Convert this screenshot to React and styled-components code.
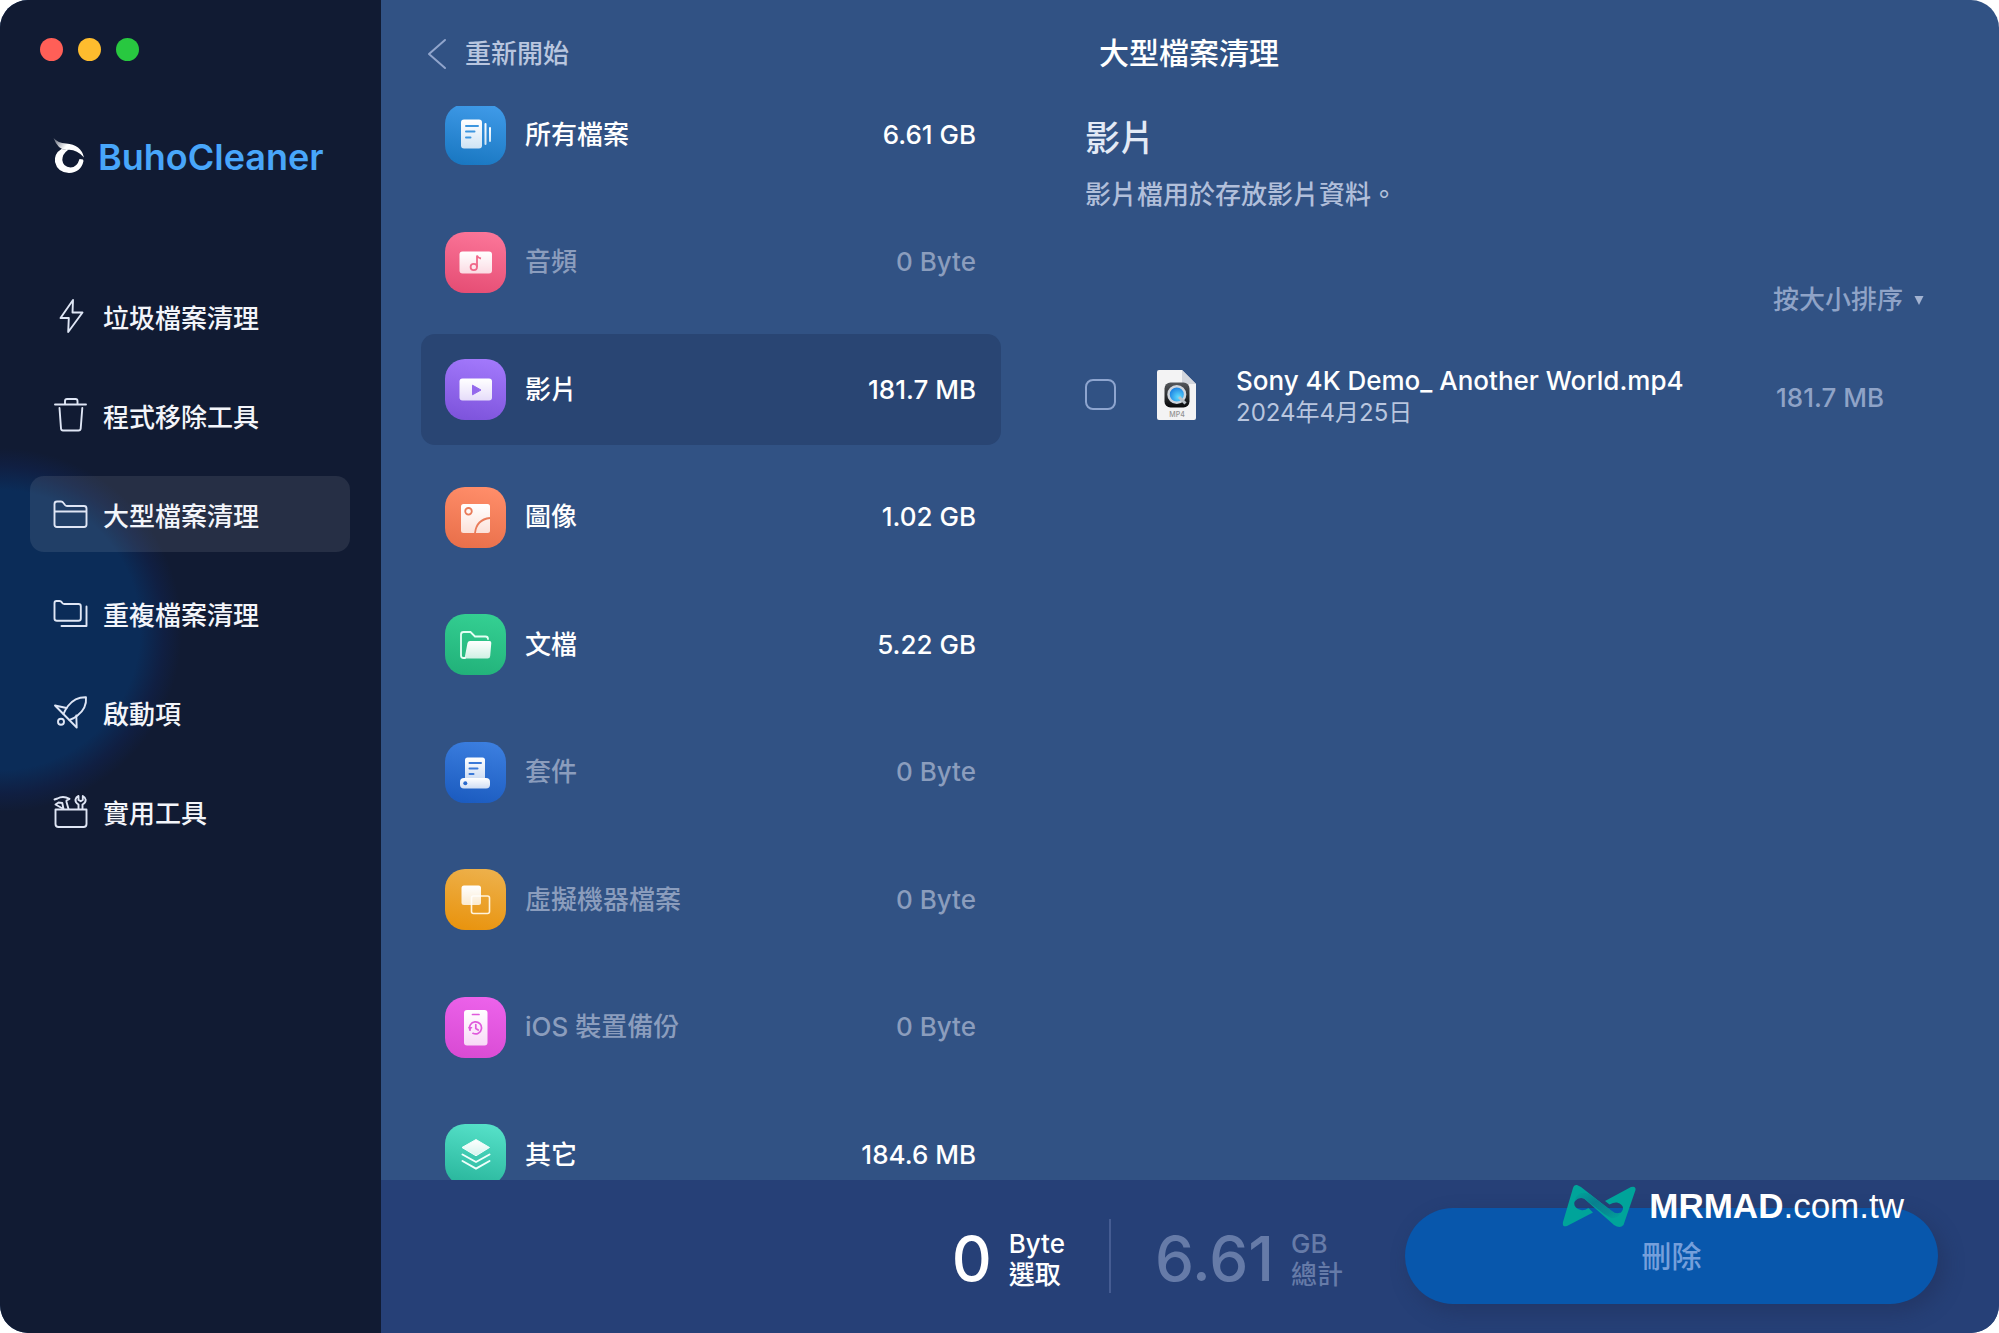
import React, { useState } from "react";
import styled, { createGlobalStyle } from "styled-components";

const GlobalStyle = createGlobalStyle`
  *, *::before, *::after { box-sizing: border-box; }
  body {
    margin: 0;
    background: #ffffff;
    color: #ffffff;
    font-family: Inter, "Noto Sans CJK TC", sans-serif;
    font-size: 26px;
    font-weight: 500;
    line-height: 36px;
  }
  button, select, input { font: inherit; color: inherit; }
  h1, h2, p, ul { margin: 0; padding: 0; }
  ul { list-style: none; }
`;

const Window = styled.div`
  position: relative;
  display: grid;
  grid-template-columns: 381px minmax(0, 1fr);
  height: 100vh;
  overflow: hidden;
  border-radius: 28px;
  background: #315284;
`;

/* Sidebar */

const Sidebar = styled.aside`
  display: flex;
  flex-direction: column;
  padding: 38px 31px 0 30px;
  background:
    radial-gradient(circle at 0 630px, #0b2c58 0, #0b2c58 140px, #101f42 164px, transparent 182px),
    #111b33;
`;

const TrafficLights = styled.div`
  display: flex;
  gap: 15px;
  padding-left: 10px;
`;

const Light = styled.button`
  width: 23px;
  height: 23px;
  padding: 0;
  border: 0;
  border-radius: 50%;
  background: ${(p) => p.$color};
`;

const Brand = styled.div`
  display: flex;
  align-items: center;
  gap: 12px;
  margin-top: 72px;
  padding-left: 22px;
  height: 48px;
  color: #48a6fa;
  font-size: 36px;
  font-weight: 600;
`;

const Nav = styled.nav`
  display: flex;
  flex-direction: column;
  gap: 23px;
  margin-top: 97px;
`;

const NavLink = styled.a`
  display: flex;
  align-items: center;
  gap: 15px;
  height: 76px;
  padding-left: 22px;
  border-radius: 14px;
  background: ${(p) => (p.$active ? "rgba(255, 255, 255, 0.09)" : "transparent")};
  color: #f3f5fa;
  text-decoration: none;
`;

const NavLabel = styled.span`
  padding-top: 5px;
`;

const LineIcon = styled.svg`
  flex: none;
  width: 36px;
  height: 36px;
  fill: none;
  stroke: #dfe6f5;
  stroke-width: 1.9;
  stroke-linecap: round;
  stroke-linejoin: round;
`;

/* Main area */

const Main = styled.main`
  display: grid;
  grid-template-columns: 620px minmax(0, 1fr);
  grid-template-rows: minmax(0, 1fr) auto;
`;

const ListPane = styled.section`
  display: flex;
  flex-direction: column;
  min-height: 0;
  padding-left: 40px;
`;

const PaneHeader = styled.header`
  display: flex;
  flex: none;
  align-items: center;
  height: 106px;
`;

const BackButton = styled.button`
  display: flex;
  align-items: center;
  gap: 18px;
  padding: 1px 0 0 6px;
  border: 0;
  background: none;
  color: #b9c6df;
`;

const Scroller = styled.div`
  flex: 1;
  min-height: 0;
  overflow: hidden;
`;

const CategoryList = styled.ul`
  display: flex;
  flex-direction: column;
  justify-content: space-between;
  height: calc(100% + 57px);
  margin-top: -27px;
`;

const CategoryButton = styled.button`
  display: flex;
  align-items: center;
  width: 100%;
  height: 111px;
  padding: 0 25px 0 24px;
  border: 0;
  border-radius: 14px;
  background: ${(p) => (p.$selected ? "#294573" : "transparent")};
  color: ${(p) => (p.$empty ? "#8b9dbd" : "#ffffff")};
  text-align: left;
`;

const Tile = styled.svg`
  flex: none;
  width: 61px;
  height: 61px;
  margin-right: 19px;
`;

const CategoryName = styled.span`
  flex: 1;
`;

const Detail = styled.section`
  display: flex;
  flex-direction: column;
  padding: 0 61px 0 84px;
`;

const PageTitle = styled.h1`
  padding-left: 14px;
  font-size: 30px;
  font-weight: 500;
`;

const DetailTitle = styled.h2`
  margin-top: 7px;
  color: #e3eaf6;
  font-size: 35px;
  font-weight: 500;
  line-height: 50px;
`;

const Description = styled.p`
  margin-top: 14px;
  color: #b1bfda;
`;

const SortLabel = styled.label`
  display: flex;
  align-items: center;
  align-self: flex-end;
  gap: 10px;
  margin-top: 69px;
  padding-right: 14px;
  color: #8fa3c7;
`;

const SortSelect = styled.select`
  appearance: none;
  height: 36px;
  padding: 0;
  border: 0;
  background: none;
`;

const FileRow = styled.li`
  display: flex;
  align-items: center;
  margin-top: 21px;
  padding-right: 54px;
  height: 111px;
`;

const CheckBox = styled.input`
  appearance: none;
  flex: none;
  width: 31px;
  height: 31px;
  margin: 0;
  border: 2px solid #8ea5cf;
  border-radius: 8px;
  &:checked { background: #48a6fa; }
`;

const FileIcon = styled.svg`
  flex: none;
  width: 42px;
  height: 52px;
  margin: 0 38px 0 40px;
`;

const FileLabel = styled.label`
  display: flex;
  flex: 1;
  flex-direction: column;
  padding-top: 4px;
`;

const FileName = styled.span`
  line-height: 32px;
`;

const FileDate = styled.span`
  color: #b9c6df;
  font-size: 24px;
  font-weight: 400;
  line-height: 32px;
`;

const FileSize = styled.span`
  padding-top: 6px;
  color: #8fa3c7;
`;

/* Footer */

const Footer = styled.footer`
  display: flex;
  grid-column: 1 / -1;
  align-items: center;
  justify-content: flex-end;
  padding: 28px 61px 29px 40px;
  background: #264077;
`;

const Stat = styled.div`
  display: flex;
  align-items: center;
  gap: 17px;
  padding-top: 6px;
  color: ${(p) => (p.$muted ? "#667ba8" : "#ffffff")};
`;

const StatNumber = styled.span`
  font-size: 62px;
  line-height: 72px;
`;

const StatUnit = styled.span`
  display: flex;
  flex-direction: column;
  line-height: 31px;
`;

const Divider = styled.span`
  width: 2px;
  height: 74px;
  margin: 0 44px;
  background: #455c92;
`;

const DeleteButton = styled.button`
  flex: 0 1 533px;
  height: 96px;
  margin-left: 62px;
  border: 0;
  border-radius: 48px;
  background: #0857ac;
  box-shadow: 6px 8px 20px rgba(32, 44, 84, 0.45);
  color: #759fdb;
  font-size: 30px;
`;

const Watermark = styled.div`
  position: absolute;
  right: 95px;
  bottom: 103px;
  display: flex;
  align-items: center;
  gap: 12px;
  font-family: "Liberation Sans", Arial, sans-serif;
  font-size: 35px;
  font-weight: 400;
  line-height: 48px;
`;

/* Drawings */

const navItems = [
  {
    name: "垃圾檔案清理",
    art: <path d="M20 1 7.500 19H15.800L15.200 33 29.500 13.500H19.500Z" />,
  },
  {
    name: "程式移除工具",
    art: (
      <>
        <path d="M2 6.500H33M12 6.500V3Q12 1 14 1H22.500Q24.500 1 24.500 3V6.500" />
        <path d="M6.500 10 8 30.500Q8.200 32.500 10 32.500H25.500Q27.500 32.500 27.700 30.500L29.300 10" />
      </>
    ),
  },
  {
    name: "大型檔案清理",
    art: (
      <path d="M1.500 7Q1.500 4.500 4 4.500H8Q9.500 4.500 10.500 6L12 8Q12.800 9 14 9H31Q33.500 9 33.500 11.500V27.500Q33.500 30 31 30H4Q1.500 30 1.500 27.500ZM1.500 14.500H33.500" />
    ),
  },
  {
    name: "重複檔案清理",
    art: (
      <path d="M1.500 7Q1.500 5 3.500 5H6.500Q8 5 8.800 6.200L9.300 7Q10 8 11.500 8H25.500Q27.800 8 27.800 10.300V22.500Q27.800 24.800 25.500 24.800H4Q1.500 24.800 1.500 22.500ZM33.500 10.500V30H8.500" />
    ),
  },
  {
    name: "啟動項",
    art: (
      <>
        <path d="M2 10.500 23.700 32.500 23.300 20.500M2 10.500 13.500 13" />
        <path d="M10.500 19Q12 15 15 11 22 2 33 2.300 34 13 24.500 20.500 21 23.500 16.500 25" />
        <circle cx="8" cy="26.700" r="3" />
      </>
    ),
  },
  {
    name: "實用工具",
    art: (
      <>
        <path d="M2.500 15.500H33.500V30Q33.500 33 30.500 33H5.500Q2.500 33 2.500 30Z" />
        <path d="M1.500 5.500 4.500 4.500Q10 1.500 16.500 4.800L13.500 6.500V8L15.500 15M10.500 15 9.300 9 5.500 8.500 2.500 10.500Z" />
        <path d="M25.500 15V10.500Q22 8.500 22.500 5.500 23 3 25.500 2V6L27.700 7.200 29.800 6V2Q32.500 3.500 32.700 5.800 32.700 9 29.500 10.500V15" />
      </>
    ),
  },
];

const categories = [
  {
    id: "all", name: "所有檔案", size: "6.61 GB", from: "#3f9ae8", to: "#1a78c2",
    art: (
      <>
        <rect x="16" y="15.500" width="21" height="29" rx="3" />
        <rect x="39.500" y="19" width="2" height="22" rx="1" />
        <rect x="44" y="23" width="2" height="15" rx="1" />
        <path d="M21 22H33M21 27.500H29.500M21 33.500H25.500" fill="none" stroke="#3c96df" strokeWidth="2" strokeLinecap="round" />
      </>
    ),
  },
  {
    id: "audio", name: "音頻", size: "0 Byte", empty: true, from: "#fb7598", to: "#e64e75",
    art: (
      <>
        <rect x="14.500" y="19.500" width="32.500" height="22" rx="3" />
        <path d="M32 35V23.500Q33 26 36 26.500" fill="none" stroke="#f0688a" strokeWidth="1.800" />
        <circle cx="28.800" cy="35" r="3.200" fill="none" stroke="#f0688a" strokeWidth="1.800" />
      </>
    ),
  },
  {
    id: "video", name: "影片", size: "181.7 MB", from: "#a278fb", to: "#7e54dc",
    art: (
      <>
        <rect x="14.500" y="19.500" width="32.500" height="22" rx="3" />
        <path d="M27.500 26.200V35.800L36 31Z" fill="#9468ec" stroke="#9468ec" strokeLinejoin="round" />
      </>
    ),
  },
  {
    id: "image", name: "圖像", size: "1.02 GB", from: "#ff8d69", to: "#e9704b",
    art: (
      <>
        <rect x="16" y="17" width="29" height="29" rx="2.500" />
        <circle cx="23.500" cy="24.300" r="3.300" fill="none" stroke="#e97b59" strokeWidth="1.800" />
        <path d="M30 46Q31.500 32.500 45 31" fill="none" stroke="#e97b59" strokeWidth="1.800" />
      </>
    ),
  },
  {
    id: "document", name: "文檔", size: "5.22 GB", from: "#34cf92", to: "#22b27a",
    art: (
      <>
        <path d="M20 44H18.500Q16 44 16 41.500V20.500Q16 18 18.500 18H25.500L30 22.500H40.500Q43 22.500 43 25" fill="none" stroke="#e4fff4" strokeWidth="1.800" strokeLinecap="round" />
        <path d="M25 27H44.500Q46.500 27 46.300 29L45.200 42Q45 44.500 42.500 44.500H19.500L22.500 29Q23 27 25 27Z" />
      </>
    ),
  },
  {
    id: "package", name: "套件", size: "0 Byte", empty: true, from: "#3b7edf", to: "#1c5cc0",
    art: (
      <>
        <path d="M20 36V18Q20 15.500 22.500 15.500H37.500Q40 15.500 40 18V36Z" />
        <rect x="15" y="36" width="30" height="10.500" rx="4" />
        <circle cx="20.300" cy="41.200" r="2" fill="#2a6acd" />
        <path d="M24.500 21H36M24.500 26.500H32.500M24.500 32H28.500" fill="none" stroke="#3a79d8" strokeWidth="2" strokeLinecap="round" />
      </>
    ),
  },
  {
    id: "vm", name: "虛擬機器檔案", size: "0 Byte", empty: true, from: "#edb04a", to: "#e9940f",
    art: (
      <>
        <rect x="26.500" y="27" width="18" height="17.500" rx="2" fill="none" stroke="#fff3dc" strokeWidth="1.600" />
        <rect x="16.500" y="16.500" width="19.500" height="19.500" rx="2.500" />
      </>
    ),
  },
  {
    id: "ios", name: "iOS 裝置備份", size: "0 Byte", empty: true, from: "#ec62ea", to: "#d94bd4",
    art: (
      <>
        <rect x="19" y="13" width="23.500" height="35.500" rx="3" />
        <path d="M27.500 17.500H34M25 33.200A6 6 0 1 1 28 36.300M30.800 27.500V31.500L33.200 33" fill="none" stroke="#e05adc" strokeWidth="1.700" strokeLinecap="round" />
        <path d="M23 30H27.500L25 33.500Z" fill="#e05adc" />
      </>
    ),
  },
  {
    id: "other", name: "其它", size: "184.6 MB", from: "#55e0c8", to: "#2ab79d",
    art: (
      <>
        <path d="M31 15.500 44.500 23.500 31 31.800 17 23.500Z" stroke="#f1fffc" strokeLinejoin="round" />
        <path d="M17.500 30.500 31 38 44.500 30.500M17.500 37 31 44.700 44.500 37" fill="none" stroke="#effffb" strokeWidth="2" strokeLinecap="round" strokeLinejoin="round" />
      </>
    ),
  },
];

function CategoryTile({ id, from, to, children }) {
  return (
    <Tile viewBox="0 0 61 61" aria-hidden="true">
      <defs>
        <linearGradient id={`tile-${id}`} x1="0.6" y1="0" x2="0.4" y2="1">
          <stop stopColor={from} />
          <stop offset="1" stopColor={to} />
        </linearGradient>
        <linearGradient id={`glyph-${id}`} x1="0" y1="0" x2="0" y2="1">
          <stop stopColor="#ffffff" />
          <stop offset="1" stopColor="#ffffff" stopOpacity="0.78" />
        </linearGradient>
      </defs>
      <rect width="61" height="61" rx="20" fill={`url(#tile-${id})`} />
      <g fill={`url(#glyph-${id})`}>{children}</g>
    </Tile>
  );
}

function BrandMark() {
  return (
    <svg width="34" height="38" viewBox="0 0 34 38" aria-hidden="true">
      <defs>
        <linearGradient id="brow" x1="0" y1="0" x2="1" y2="0.5">
          <stop stopColor="#ffffff" stopOpacity="0.3" />
          <stop offset="0.5" stopColor="#ffffff" />
        </linearGradient>
      </defs>
      <path d="M1.500 0Q6 5 14 5.500 29 6.500 32 19.500 24 10.500 14.500 12 6 12 1.500 0Z" fill="url(#brow)" />
      <path d="M9.500 11Q2 15.500 3 24 5.500 34.500 17 35 29 34.500 31.500 23L31 21.500 27.500 21Q25 29.500 18.500 29.500 11 29 10.300 22 10.300 16 16 12Z" fill="#ffffff" />
    </svg>
  );
}

function MovieFileIcon() {
  return (
    <FileIcon viewBox="0 0 42 52" aria-hidden="true">
      <defs>
        <linearGradient id="movie-case" x1="0" y1="0" x2="0" y2="1">
          <stop stopColor="#55585c" />
          <stop offset="1" stopColor="#08090b" />
        </linearGradient>
        <radialGradient id="movie-lens" cx="0.6" cy="0.65" r="0.6">
          <stop stopColor="#5fdcff" />
          <stop offset="1" stopColor="#1b7fe0" />
        </radialGradient>
      </defs>
      <path d="M3 1H26L40 15V49Q40 51 38 51H3Q1 51 1 49V3Q1 1 3 1Z" fill="#f3f3f4" />
      <path d="M26 1 40 15H28Q26 15 26 13Z" fill="#d3d6dc" />
      <rect x="8.500" y="13.500" width="25" height="25" rx="6" fill="url(#movie-case)" />
      <circle cx="20.800" cy="25.500" r="8.300" fill="url(#movie-lens)" stroke="#cfd5dc" strokeWidth="2.500" />
      <path d="M23 28 29.500 34.500" stroke="#b9c0c8" strokeWidth="3" />
      <text x="21" y="48" textAnchor="middle" fontFamily="Inter, sans-serif" fontSize="7" fill="#929292">MP4</text>
    </FileIcon>
  );
}

function WatermarkMark() {
  return (
    <svg width="75" height="44" viewBox="0 0 75 44" aria-hidden="true">
      <defs>
        <linearGradient id="ribbon" x1="0" y1="0" x2="1" y2="1">
          <stop stopColor="#00a49a" />
          <stop offset="0.4" stopColor="#08808f" />
          <stop offset="0.75" stopColor="#078c94" />
          <stop offset="1" stopColor="#00a49a" />
        </linearGradient>
      </defs>
      <path
        d="M15 1Q12 .5 11 4L1 38Q0 43.500 5 42L31 28.500 26.500 24Q22 27 19 26 11 23.500 12.500 18 15 12 22 14.500L52 41Q58 45 61.500 41L73.500 6Q74 1.500 69 3L43 17 47.500 20.500Q52 18 55 18.500 61.500 20.500 61 25 58.500 32 52 29L19 3Z"
        fill="#00a49a"
      />
      <path d="M19 9Q26 8 30 12L50 27Q54 30.500 58.500 28.500 56 35 49 34L42 30 22 14.500Q17 12.500 13 17 13.500 11 19 9Z" fill="url(#ribbon)" />
    </svg>
  );
}

export default function App() {
  const [selected, setSelected] = useState("video");

  return (
    <>
      <GlobalStyle />
      <Window lang="zh-Hant">
        <Sidebar>
          <TrafficLights>
            <Light $color="#ff5f57" aria-label="關閉" />
            <Light $color="#febc2e" aria-label="縮到最小" />
            <Light $color="#28c840" aria-label="放大" />
          </TrafficLights>
          <Brand>
            <BrandMark />
            BuhoCleaner
          </Brand>
          <Nav>
            {navItems.map((item, i) => (
              <NavLink key={item.name} href="#" $active={i === 2}>
                <LineIcon viewBox="-1 -1 36 36" aria-hidden="true">{item.art}</LineIcon>
                <NavLabel>{item.name}</NavLabel>
              </NavLink>
            ))}
          </Nav>
        </Sidebar>

        <Main>
          <ListPane>
            <PaneHeader>
              <BackButton>
                <svg width="20" height="32" viewBox="0 0 20 32" fill="none" stroke="#91a5cc" strokeWidth="2" strokeLinecap="round" strokeLinejoin="round" aria-hidden="true">
                  <path d="M18 2 2 16 18 30" />
                </svg>
                重新開始
              </BackButton>
            </PaneHeader>
            <Scroller>
              <CategoryList>
                {categories.map((c) => (
                  <li key={c.id}>
                    <CategoryButton $selected={selected === c.id} $empty={c.empty} onClick={() => setSelected(c.id)}>
                      <CategoryTile id={c.id} from={c.from} to={c.to}>{c.art}</CategoryTile>
                      <CategoryName>{c.name}</CategoryName>
                      <span>{c.size}</span>
                    </CategoryButton>
                  </li>
                ))}
              </CategoryList>
            </Scroller>
          </ListPane>

          <Detail>
            <PaneHeader>
              <PageTitle>大型檔案清理</PageTitle>
            </PaneHeader>
            <DetailTitle>影片</DetailTitle>
            <Description>影片檔用於存放影片資料。</Description>
            <SortLabel>
              <SortSelect aria-label="排序">
                <option>按大小排序</option>
              </SortSelect>
              <svg width="10" height="10" viewBox="0 0 10 10" fill="#a3b3d1" aria-hidden="true">
                <path d="M.5 1H9.500L5 10Z" />
              </svg>
            </SortLabel>
            <ul>
              <FileRow>
                <CheckBox type="checkbox" id="file-sony" />
                <MovieFileIcon />
                <FileLabel htmlFor="file-sony">
                  <FileName>Sony 4K Demo_ Another World.mp4</FileName>
                  <FileDate>2024年4月25日</FileDate>
                </FileLabel>
                <FileSize>181.7 MB</FileSize>
              </FileRow>
            </ul>
          </Detail>

          <Footer>
            <Stat>
              <StatNumber>0</StatNumber>
              <StatUnit>
                <span>Byte</span>
                <span>選取</span>
              </StatUnit>
            </Stat>
            <Divider />
            <Stat $muted>
              <StatNumber>6.61</StatNumber>
              <StatUnit>
                <span>GB</span>
                <span>總計</span>
              </StatUnit>
            </Stat>
            <DeleteButton>刪除</DeleteButton>
          </Footer>
        </Main>

        <Watermark>
          <WatermarkMark />
          <span>
            <b>MRMAD</b>.com.tw
          </span>
        </Watermark>
      </Window>
    </>
  );
}
